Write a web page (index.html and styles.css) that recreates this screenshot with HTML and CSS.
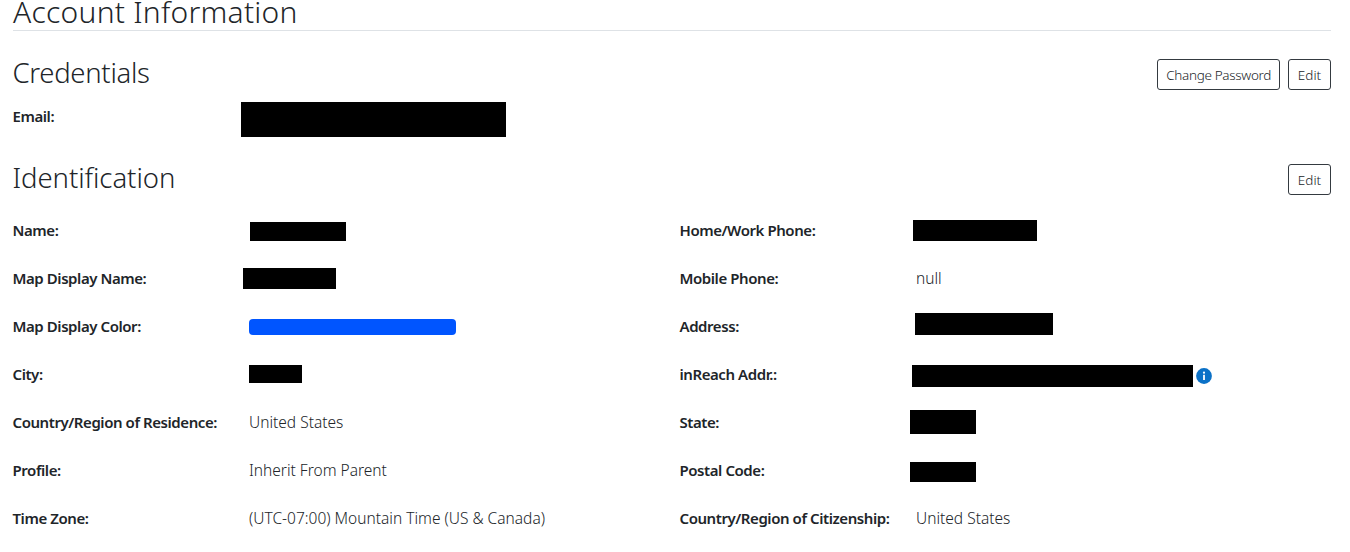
FILE: index.html
```html
<!DOCTYPE html>
<html lang="en">
<head>
<meta charset="UTF-8">
<meta name="viewport" content="width=device-width, initial-scale=1.0">
<title>Account Information</title>
<link rel="stylesheet" href="styles.css">
</head>
<body>

<div class="container">
    <h1 class="page-title">Account Information</h1>

    <div class="section-header credentials-header">
        <h2>Credentials</h2>
        <div class="actions">
            <button type="button" class="change-password">Change Password</button>
            <button type="button">Edit</button>
        </div>
    </div>
    <div class="row email-row">
        <div class="label">Email:</div>
        <div class="value"><span class="redacted email"></span></div>
    </div>

    <div class="section-header">
        <h2 class="identification-title">Identification</h2>
        <div class="actions">
            <button type="button">Edit</button>
        </div>
    </div>
    <div class="columns">
        <div class="column">
            <div class="row">
                <div class="label">Name:</div>
                <div class="value"><span class="redacted name"></span></div>
            </div>
            <div class="row">
                <div class="label">Map Display Name:</div>
                <div class="value"><span class="redacted map-name"></span></div>
            </div>
            <div class="row">
                <div class="label">Map Display Color:</div>
                <div class="value"><span class="color-bar"></span></div>
            </div>
            <div class="row">
                <div class="label">City:</div>
                <div class="value"><span class="redacted city"></span></div>
            </div>
            <div class="row">
                <div class="label">Country/Region of Residence:</div>
                <div class="value">United States</div>
            </div>
            <div class="row">
                <div class="label">Profile:</div>
                <div class="value">Inherit From Parent</div>
            </div>
            <div class="row">
                <div class="label">Time Zone:</div>
                <div class="value">(UTC-07:00) Mountain Time (US &amp; Canada)</div>
            </div>
        </div>
        <div class="column">
            <div class="row">
                <div class="label">Home/Work Phone:</div>
                <div class="value"><span class="redacted phone"></span></div>
            </div>
            <div class="row">
                <div class="label">Mobile Phone:</div>
                <div class="value">null</div>
            </div>
            <div class="row">
                <div class="label">Address:</div>
                <div class="value"><span class="redacted address"></span></div>
            </div>
            <div class="row">
                <div class="label">inReach Addr.:</div>
                <div class="value">
                    <span class="redacted inreach"></span>
                    <svg class="info-icon" width="16" height="16" viewBox="0 0 16 16">
                        <circle cx="8" cy="8" r="7.9" fill="#0b71c7"/>
                        <circle cx="8" cy="4.7" r="1.1" fill="#fff"/>
                        <rect x="7.1" y="6.8" width="1.8" height="5.2" fill="#fff"/>
                    </svg>
                </div>
            </div>
            <div class="row">
                <div class="label">State:</div>
                <div class="value"><span class="redacted state"></span></div>
            </div>
            <div class="row">
                <div class="label">Postal Code:</div>
                <div class="value"><span class="redacted postal"></span></div>
            </div>
            <div class="row">
                <div class="label">Country/Region of Citizenship:</div>
                <div class="value">United States</div>
            </div>
        </div>
    </div>
</div>

</body>
</html>
```
FILE: styles.css
```css
* {
    box-sizing: border-box;
}

body {
    margin: 0;
    overflow: hidden;
    font-family: "Noto Sans", sans-serif;
    font-size: 15.5px;
    color: #212529;
    background-color: #fff;
}

.container {
    padding: 0 19px 0 12px;
}

h1, h2 {
    margin: 0;
    font-weight: 300;
    line-height: 34px;
}

h2 {
    padding-left: 0.5px;
    font-size: 27.5px;
    letter-spacing: -0.3px;
}

.identification-title {
    letter-spacing: -0.05px;
}

.page-title {
    height: 31px;
    margin-left: 1px;
    font-size: 30px;
    line-height: 24px;
    letter-spacing: 0.25px;
    border-bottom: 1px solid #dee2e6;
}

.section-header {
    display: flex;
    justify-content: space-between;
    height: 46px;
}

.credentials-header {
    height: 43px;
    margin-top: 25px;
}

.actions {
    display: flex;
    gap: 8px;
    padding-top: 3px;
}

button {
    height: 31px;
    padding: 0 8px;
    min-width: 43px;
    font-family: inherit;
    font-size: 13.5px;
    font-weight: 300;
    color: #212529;
    background-color: #fff;
    border: 1px solid #343a40;
    border-radius: 3px;
    cursor: pointer;
}

.change-password {
    letter-spacing: -0.33px;
}

.columns {
    display: flex;
}

.column {
    flex: 0 0 667px;
}

.row {
    display: flex;
    height: 48px;
    line-height: 46px;
}

.email-row {
    height: 62px;
    line-height: 34px;
}

.label {
    width: 237px;
    padding-left: 0.5px;
    font-size: 15px;
    font-weight: 600;
    letter-spacing: -0.43px;
    white-space: nowrap;
}

.value {
    display: flex;
    align-items: flex-start;
    font-weight: 300;
    white-space: nowrap;
}

.redacted {
    background-color: #000;
}

.email {
    width: 265px;
    height: 35px;
    margin: 3px 0 0 -8px;
}

.name {
    width: 96px;
    height: 19px;
    margin: 15px 0 0 1px;
}

.map-name {
    width: 93px;
    height: 21px;
    margin: 13px 0 0 -6px;
}

.color-bar {
    width: 207px;
    height: 16px;
    margin-top: 16px;
    background-color: #0055ff;
    border-radius: 4px;
}

.city {
    width: 53px;
    height: 18px;
    margin-top: 14px;
}

.phone {
    width: 124px;
    height: 21px;
    margin: 13px 0 0 -3px;
}

.address {
    width: 138px;
    height: 22px;
    margin: 10px 0 0 -1px;
}

.inreach {
    width: 281px;
    height: 22px;
    margin: 14px 0 0 -4px;
}

.info-icon {
    margin: 17px 0 0 3px;
}

.state {
    width: 66px;
    height: 24px;
    margin: 11px 0 0 -6px;
}

.postal {
    width: 66px;
    height: 20px;
    margin: 15px 0 0 -6px;
}
```
